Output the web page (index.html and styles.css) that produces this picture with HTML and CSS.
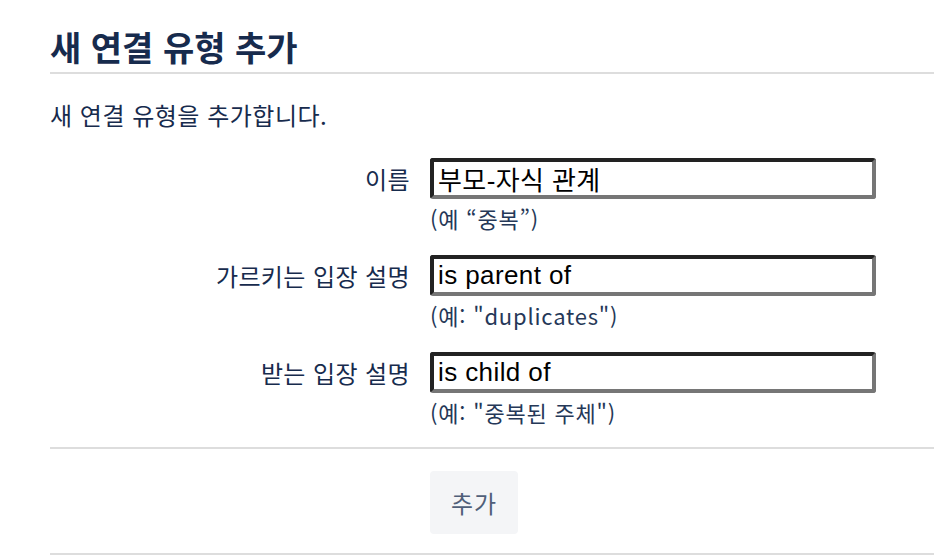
FILE: index.html
```html
<!DOCTYPE html>
<html lang="ko">
<head>
<meta charset="utf-8">
<title>새 연결 유형 추가</title>
<link rel="stylesheet" href="styles.css">
</head>
<body>
<div class="page">
  <h2 class="title">새 연결 유형 추가</h2>
  <p class="desc">새 연결 유형을 추가합니다.</p>
  <form class="form">
    <div class="row">
      <label class="label" for="name">이름</label>
      <div class="field">
        <input class="input" id="name" type="text" value="부모-자식 관계">
        <div class="hint">(예 “중복”)</div>
      </div>
    </div>
    <div class="row">
      <label class="label" for="out">가르키는 입장 설명</label>
      <div class="field">
        <input class="input" id="out" type="text" value="is parent of">
        <div class="hint">(예: "duplicates")</div>
      </div>
    </div>
    <div class="row">
      <label class="label" for="in">받는 입장 설명</label>
      <div class="field">
        <input class="input" id="in" type="text" value="is child of">
        <div class="hint">(예: "중복된 주체")</div>
      </div>
    </div>
    <div class="buttons">
      <button class="btn" type="button">추가</button>
    </div>
  </form>
</div>
</body>
</html>
```
FILE: styles.css
```css
html, body {
  margin: 0;
  padding: 0;
  background: #ffffff;
}
body {
  font-family: "Noto Sans CJK KR", "Noto Sans", sans-serif;
  color: #172b4d;
}
.page {
  padding-left: 50px;
}
.title {
  margin: 0;
  padding: 26px 0 4px;
  font-size: 34px;
  line-height: 42px;
  font-weight: 700;
  color: #172b4d;
  border-bottom: 2px solid #dddddd;
}
.desc {
  margin: 26px 0 0;
  font-size: 24px;
  line-height: 30px;
  letter-spacing: 0.5px;
}
.form {
  margin-top: 28px;
}
.row {
  display: grid;
  grid-template-columns: 360px 446px;
  column-gap: 20px;
  margin-bottom: 24px;
}
.label {
  text-align: right;
  font-size: 24px;
  line-height: 41px;
  letter-spacing: 0.4px;
  color: #172b4d;
}
.input {
  display: block;
  box-sizing: border-box;
  width: 446px;
  height: 41px;
  margin: 0;
  padding: 0 4px;
  border-style: solid;
  border-width: 4px;
  border-color: #222222 #767676 #767676 #222222;
  border-radius: 3px;
  font-family: "Liberation Sans", Arial, "Noto Sans CJK KR", sans-serif;
  font-size: 26px;
  letter-spacing: 0.4px;
  color: #000000;
  background: #ffffff;
  outline: none;
}
.hint {
  margin-top: 6px;
  font-size: 22px;
  line-height: 26px;
  letter-spacing: 0.8px;
  color: #253858;
}
.buttons {
  margin-top: -2px;
  border-top: 2px solid #dddddd;
  border-bottom: 2px solid #dddddd;
  padding: 22px 0 19px 380px;
}
.btn {
  display: block;
  width: 88px;
  height: 63px;
  border: none;
  border-radius: 4px;
  background: #f4f5f7;
  color: #505f79;
  font-family: "Noto Sans CJK KR", sans-serif;
  font-size: 24px;
  letter-spacing: 1px;
  cursor: pointer;
}
```
